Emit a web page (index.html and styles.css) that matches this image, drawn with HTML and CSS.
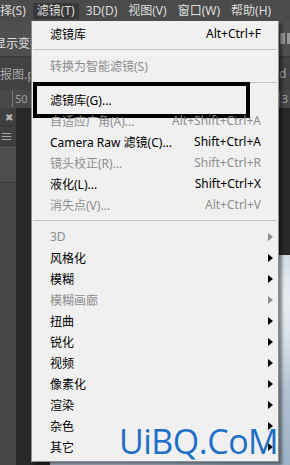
FILE: index.html
```html
<!DOCTYPE html>
<html lang="zh-CN">
<head>
    <meta charset="UTF-8">
    <title>滤镜菜单</title>
    <link rel="stylesheet" href="styles.css">
</head>
<body>
    <div class="screen">
        <div class="menubar">
            <span class="menubar-item cut">择(S)</span>
            <span class="menubar-item active">滤镜(T)</span>
            <span class="menubar-item">3D(D)</span>
            <span class="menubar-item">视图(V)</span>
            <span class="menubar-item">窗口(W)</span>
            <span class="menubar-item">帮助(H)</span>
        </div>

        <div class="options-bar">
            <span class="options-text">显示变换</span>
            <span class="options-icons"><i></i><i></i></span>
        </div>

        <div class="tab-row">
            <span class="left-clip">报图.psd</span>
            <span class="right-clip">d c</span>
        </div>

        <div class="ruler">
            <span class="ruler-mark">50</span>
            <span class="ruler-mark right">3</span>
        </div>

        <div class="workspace">
            <div class="side-panel">
                <div class="panel-head">✖</div>
                <div class="panel-head lines">≡</div>
                <div class="panel-box"></div>
            </div>
            <div class="canvas-area">
                <div class="canvas-image"></div>
            </div>
        </div>

        <div class="dropdown">
            <div class="item"><span class="label">滤镜库</span><span class="key">Alt+Ctrl+F</span><span class="sub"></span></div>
            <div class="sep"></div>
            <div class="item off"><span class="label">转换为智能滤镜(S)</span><span class="key"></span><span class="sub"></span></div>
            <div class="sep wide"></div>
            <div class="item marked"><span class="label">滤镜库(G)...</span><span class="key"></span><span class="sub"></span></div>
            <div class="item off"><span class="label">自适应广角(A)...</span><span class="key">Alt+Shift+Ctrl+A</span><span class="sub"></span></div>
            <div class="item"><span class="label">Camera Raw 滤镜(C)...</span><span class="key">Shift+Ctrl+A</span><span class="sub"></span></div>
            <div class="item off"><span class="label">镜头校正(R)...</span><span class="key">Shift+Ctrl+R</span><span class="sub"></span></div>
            <div class="item"><span class="label">液化(L)...</span><span class="key">Shift+Ctrl+X</span><span class="sub"></span></div>
            <div class="item off"><span class="label">消失点(V)...</span><span class="key">Alt+Ctrl+V</span><span class="sub"></span></div>
            <div class="sep"></div>
            <div class="item off"><span class="label">3D</span><span class="key"></span><span class="sub arrow"></span></div>
            <div class="item"><span class="label">风格化</span><span class="key"></span><span class="sub arrow"></span></div>
            <div class="item"><span class="label">模糊</span><span class="key"></span><span class="sub arrow"></span></div>
            <div class="item off"><span class="label">模糊画廊</span><span class="key"></span><span class="sub arrow"></span></div>
            <div class="item"><span class="label">扭曲</span><span class="key"></span><span class="sub arrow"></span></div>
            <div class="item"><span class="label">锐化</span><span class="key"></span><span class="sub arrow"></span></div>
            <div class="item"><span class="label">视频</span><span class="key"></span><span class="sub arrow"></span></div>
            <div class="item"><span class="label">像素化</span><span class="key"></span><span class="sub arrow"></span></div>
            <div class="item"><span class="label">渲染</span><span class="key"></span><span class="sub arrow"></span></div>
            <div class="item"><span class="label">杂色</span><span class="key"></span><span class="sub arrow"></span></div>
            <div class="item"><span class="label">其它</span><span class="key"></span><span class="sub arrow"></span></div>
        </div>

        <div class="watermark">UiBQ.CoM</div>
    </div>
</body>
</html>
```

FILE: styles.css
```css
* {
    margin: 0;
    padding: 0;
    box-sizing: border-box;
}

body {
    background: #2a2a2a;
    font-family: 'Noto Sans', 'Noto Sans CJK SC', sans-serif;
}

.screen {
    position: relative;
    width: 290px;
    height: 465px;
    overflow: hidden;
    display: flex;
    flex-direction: column;
    background: #2a2a2a;
}

/* top menu bar */
.menubar {
    height: 21px;
    flex: none;
    display: flex;
    align-items: center;
    gap: 3px;
    background: #4b4b4b;
    font-size: 12px;
    color: #dedede;
    white-space: nowrap;
    overflow: hidden;
}

.menubar-item {
    padding: 0 4px;
    height: 16px;
    line-height: 16px;
}

.menubar-item.cut {
    margin-left: -4px;
}

.menubar-item.active {
    background: #383838;
}

/* options bar */
.options-bar {
    height: 36px;
    flex: none;
    display: flex;
    justify-content: space-between;
    align-items: center;
    padding-top: 8px;
    background: #4f4f4f;
    border-bottom: 1px solid #3a3a3a;
    font-size: 12px;
    color: #e2e2e2;
    white-space: nowrap;
}

.options-text {
    width: 37px;
    margin-left: -6px;
    overflow: hidden;
    white-space: nowrap;
}

.left-clip {
    width: 31px;
    overflow: hidden;
    white-space: nowrap;
}

.right-clip {
    width: 11px;
    overflow: hidden;
    white-space: nowrap;
    text-align: right;
}

.options-icons {
    display: flex;
    gap: 2px;
    margin-top: -8px;
    margin-right: -2px;
}

.options-icons i {
    width: 5px;
    height: 11px;
    background: #9a9a9a;
}

/* document tab */
.tab-row {
    height: 33px;
    flex: none;
    display: flex;
    justify-content: space-between;
    align-items: center;
    background: #424242;
    font-size: 12px;
    color: #a8a8a8;
}

/* ruler */
.ruler {
    height: 18px;
    flex: none;
    display: flex;
    justify-content: space-between;
    align-items: center;
    background: #484848;
    font-size: 11px;
    color: #a0a0a0;
}

.ruler-mark {
    margin-left: 12px;
    padding-left: 2px;
    border-left: 1px solid #7a7a7a;
    line-height: 16px;
}

.ruler-mark.right {
    margin-left: 0;
    margin-right: 2px;
}

/* workspace */
.workspace {
    flex: 1;
    display: flex;
}

.side-panel {
    width: 16px;
    flex: none;
    background: #474747;
    display: flex;
    flex-direction: column;
}

.panel-head {
    height: 18px;
    flex: none;
    background: #3f3f3f;
    color: #b8b8b8;
    font-size: 10px;
    text-align: right;
    padding-right: 3px;
    line-height: 18px;
    border-bottom: 1px solid #333;
}

.panel-head.lines {
    height: 20px;
    line-height: 20px;
    font-size: 13px;
}

.panel-box {
    height: 37px;
    flex: none;
    background: #4d4d4d;
    border-bottom: 1px solid #3a3a3a;
}

.canvas-area {
    flex: 1;
    display: flex;
    flex-direction: column;
    justify-content: flex-end;
    align-items: flex-end;
    background: #282828;
}

.canvas-image {
    width: 240px;
    height: 210px;
    background:
        radial-gradient(ellipse at 85% 20%, rgba(255,255,255,0.8), rgba(255,255,255,0) 40%),
        radial-gradient(ellipse at 30% 70%, rgba(230,236,242,0.7), rgba(230,236,242,0) 50%),
        linear-gradient(160deg, #8ea6bd 0%, #c9d5e0 45%, #9db2c6 100%);
}

/* dropdown menu */
.dropdown {
    position: absolute;
    left: 31px;
    top: 21px;
    width: 248px;
    height: 441px;
    padding: 2px 5px 0 1px;
    background: #f0f0f0;
    border: 1px solid #8f8f8f;
    border-top: none;
    box-shadow: 3px 3px 3px rgba(0,0,0,0.45);
    font-size: 12px;
    color: #000;
    white-space: nowrap;
}

.item {
    position: relative;
    height: 21px;
    display: flex;
    align-items: center;
    padding-left: 17px;
}

.item.off {
    color: #8d8d8d;
}

.label {
    flex: 1;
}

.sub {
    width: 12px;
    flex: none;
    display: flex;
    justify-content: flex-end;
}

.sub.arrow::after {
    content: "";
    border-left: 5px solid #000;
    border-top: 4px solid transparent;
    border-bottom: 4px solid transparent;
}

.item.off .sub.arrow::after {
    border-left-color: #8d8d8d;
}

.sep {
    height: 1px;
    margin: 5px -4px 5px 0;
    background: #c3c3c3;
}

.sep.wide {
    margin: 6px -4px 6px 0;
}

/* black annotation frame */
.item.marked::after {
    content: "";
    position: absolute;
    left: 0;
    top: -7px;
    width: 209px;
    height: 28px;
    border: 4px solid #000;
}

.watermark {
    position: absolute;
    left: 119px;
    top: 418px;
    font-family: 'Open Sans', sans-serif;
    font-size: 34px;
    color: #1d6fc6;
    letter-spacing: -0.5px;
}
```
